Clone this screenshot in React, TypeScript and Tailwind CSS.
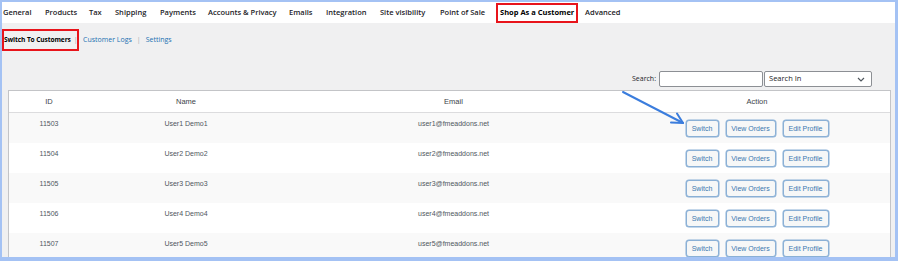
const tabs = [
  { label: "General", w: 42 },
  { label: "Products", w: 44 },
  { label: "Tax", w: 26 },
  { label: "Shipping", w: 45 },
  { label: "Payments", w: 48 },
  { label: "Accounts & Privacy", w: 81 },
  { label: "Emails", w: 37 },
  { label: "Integration", w: 54 },
  { label: "Site visibility", w: 60 },
  { label: "Point of Sale", w: 59 },
  { label: "Shop As a Customer", w: 86, active: true },
  { label: "Advanced", w: 60 },
];

const users = [
  { id: 11503, n: 1 },
  { id: 11504, n: 2 },
  { id: 11505, n: 3 },
  { id: 11506, n: 4 },
  { id: 11507, n: 5 },
];

const Btn = ({ children, w }: { children: string; w: string }) => (
  <button
    className={`${w} h-[17px] rounded-[3px] border border-[#8ab0d6] bg-[#f6f7f7] text-[7px] leading-none text-[#3b77b0] shadow-[0_0_0_0.5px_#8ab0d6]`}
  >
    {children}
  </button>
);

export default function App() {
  return (
    <div
      className="relative w-[898px] h-[261px] overflow-hidden border-t-[2px] border-l-[2px] border-r-[3px] border-b-[4px] border-[#a4c2f4] bg-[#f0f0f1]"
      style={{ fontFamily: '"Open Sans", sans-serif' }}
    >
      {/* Top tabs */}
      <div className="flex h-[21px] items-center bg-white pl-[1px] text-[7.5px] font-semibold text-[#1d2327]">
        {tabs.map((t) => (
          <div key={t.label} className="shrink-0 whitespace-nowrap" style={{ width: t.w }}>
            {t.active ? (
              <span className="-ml-[3px] inline-flex h-[20px] items-center border-2 border-[#e8141b] px-[2px] font-bold text-black">
                {t.label}
              </span>
            ) : (
              t.label
            )}
          </div>
        ))}
      </div>

      {/* Sub nav */}
      <div className="mt-[6px] flex items-center whitespace-nowrap text-[7px]">
        <span className="inline-flex h-[22px] w-[77px] shrink-0 items-center border-2 border-[#e8141b] font-bold text-black">
          <span className="text-[6.6px] tracking-[-0.1px]">Switch To Customers</span>
          <span className="ml-[3px] font-normal text-[#a7aaad]">|</span>
        </span>
        <span className="ml-[4px] text-[#2271b1]">Customer Logs</span>
        <span className="ml-[5px] text-[#a7aaad]">|</span>
        <span className="ml-[5px] text-[#2271b1]">Settings</span>
      </div>

      {/* Search */}
      <div className="mt-[20px] flex h-[16px] items-center pl-[630px] text-[7px] text-[#1d2327]">
        <span className="mr-[3px]">Search:</span>
        <div className="h-[16px] w-[104px] rounded-[2px] border border-[#8c8f94] bg-white" />
        <div className="ml-[1px] flex h-[16px] w-[108px] items-center justify-between rounded-[2px] border border-[#8c8f94] bg-white pl-[4px] pr-[6px] text-[7.5px]">
          <span>Search In</span>
          <svg width="8" height="5" viewBox="0 0 8 5" fill="none">
            <path d="M1 1l3 3 3-3" stroke="#50575e" strokeWidth="1.2" />
          </svg>
        </div>
      </div>

      {/* Table */}
      <div
        className="ml-[6px] mt-[3px] w-[883px] border border-[#c3c4c7] bg-white"
        style={{ fontFamily: '"Liberation Sans", Arial, sans-serif' }}
      >
        <div className="grid h-[22px] grid-cols-[80px_194px_341px_1fr] items-center border-b border-[#dcdcde] text-center text-[7.5px] text-[#3c434a]">
          <div>ID</div>
          <div>Name</div>
          <div>Email</div>
          <div>Action</div>
        </div>
        {users.map((u, i) => (
          <div
            key={u.id}
            className={`grid h-[30px] grid-cols-[80px_194px_341px_1fr] text-center text-[7px] text-[#50575e] ${
              i % 2 === 0 ? "bg-[#f9f9f9]" : "bg-white"
            }`}
          >
            <div className="pt-[6px]">{u.id}</div>
            <div className="pt-[6px]">
              User{u.n} Demo{u.n}
            </div>
            <div className="pt-[6px]">user{u.n}@fmeaddons.net</div>
            <div className="flex justify-center gap-[7px] pt-[7px]">
              <Btn w="w-[33px]">Switch</Btn>
              <Btn w="w-[50px]">View Orders</Btn>
              <Btn w="w-[46px]">Edit Profile</Btn>
            </div>
          </div>
        ))}
      </div>

      {/* Annotation arrow */}
      <svg
        className="pointer-events-none absolute left-[-2px] top-[-2px]"
        width="898"
        height="261"
        viewBox="0 0 898 261"
      >
        <g stroke="#3b7ddd" strokeWidth="2" strokeLinecap="round" fill="none">
          <path d="M623 92L683 123" />
          <path d="M683 123L671 122.5M683 123L677 113.5" />
        </g>
      </svg>
    </div>
  );
}
